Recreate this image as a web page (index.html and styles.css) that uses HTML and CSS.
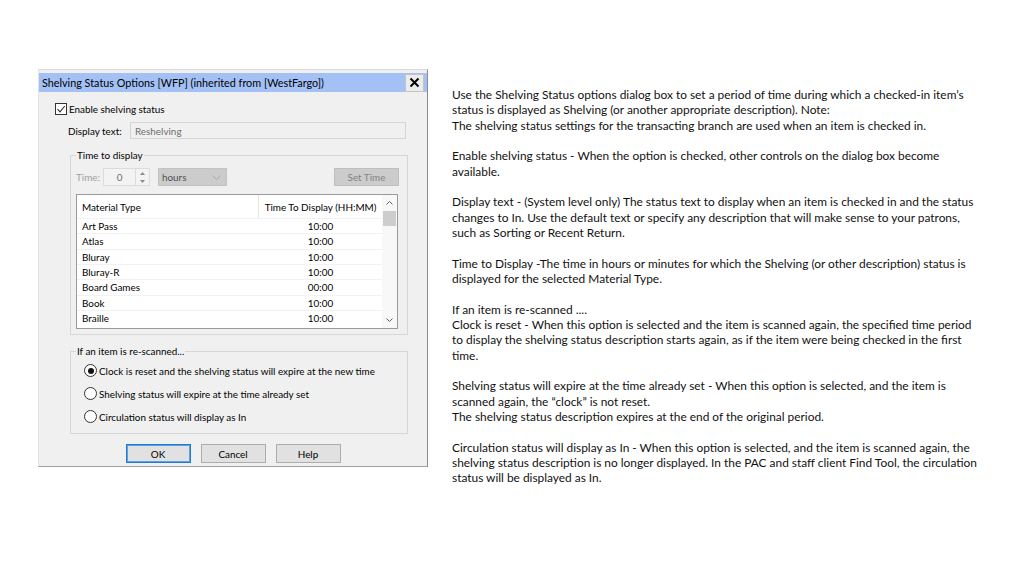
FILE: index.html
```html
<!DOCTYPE html>
<html lang="en">
<head>
<meta charset="utf-8">
<title>Shelving Status Options</title>
<link rel="stylesheet" href="styles.css">
</head>
<body>
<main class="slide">
  <section class="dialog">
    <div class="titlebar">
      <span class="title">Shelving Status Options [WFP] (inherited from [WestFargo])</span>
      <span class="close"><svg width="11" height="11" viewBox="0 0 11 11"><path d="M1.5 1.5 L9.5 9.5 M9.5 1.5 L1.5 9.5" stroke="#000" stroke-width="2" fill="none"/></svg></span>
    </div>
    <div class="dlg-body">
      <div class="check-row">
        <span class="checkbox"><svg width="10" height="10" viewBox="0 0 10 10"><path d="M1.5 5.2 L4 7.8 L8.8 2" stroke="#333" stroke-width="1.1" fill="none"/></svg></span>
        <span>Enable shelving status</span>
      </div>
      <div class="field-row">
        <span class="field-label">Display text:</span>
        <span class="textbox">Reshelving</span>
      </div>
      <fieldset class="group group-time">
        <legend>Time to display</legend>
        <div class="time-row">
          <span class="lbl-dim">Time:</span>
          <span class="numbox">0</span>
          <span class="spin">
            <span class="spin-half"><svg width="5" height="3" viewBox="0 0 5 3"><path d="M0 3 L2.5 0 L5 3 Z" fill="#8a8a8a"/></svg></span>
            <span class="spin-half"><svg width="5" height="3" viewBox="0 0 5 3"><path d="M0 0 L2.5 3 L5 0 Z" fill="#8a8a8a"/></svg></span>
          </span>
          <span class="combo"><span>hours</span><svg width="9" height="5" viewBox="0 0 9 5"><path d="M0.5 0.5 L4.5 4.5 L8.5 0.5" stroke="#a8a8a8" stroke-width="1" fill="none"/></svg></span>
          <span class="btn-dim">Set Time</span>
        </div>
        <div class="listview">
          <div class="lv-table">
            <div class="lv-head">
              <span class="c1">Material Type</span>
              <span class="c2">Time To Display (HH:MM)</span>
            </div>
            <div class="lv-row"><span class="c1">Art Pass</span><span class="c2">10:00</span></div>
            <div class="lv-row"><span class="c1">Atlas</span><span class="c2">10:00</span></div>
            <div class="lv-row"><span class="c1">Bluray</span><span class="c2">10:00</span></div>
            <div class="lv-row"><span class="c1">Bluray-R</span><span class="c2">10:00</span></div>
            <div class="lv-row"><span class="c1">Board Games</span><span class="c2">00:00</span></div>
            <div class="lv-row"><span class="c1">Book</span><span class="c2">10:00</span></div>
            <div class="lv-row"><span class="c1">Braille</span><span class="c2">10:00</span></div>
          </div>
          <div class="scrollbar">
            <span class="sb-arrow"><svg width="7" height="4" viewBox="0 0 7 4"><path d="M0.5 3.5 L3.5 0.5 L6.5 3.5" stroke="#606060" stroke-width="1" fill="none"/></svg></span>
            <span class="sb-thumb"></span>
            <span class="sb-track"></span>
            <span class="sb-arrow"><svg width="7" height="4" viewBox="0 0 7 4"><path d="M0.5 0.5 L3.5 3.5 L6.5 0.5" stroke="#606060" stroke-width="1" fill="none"/></svg></span>
          </div>
        </div>
      </fieldset>
      <fieldset class="group group-rescan">
        <legend>If an item is re-scanned...</legend>
        <div class="radio-row"><span class="radio radio-on"></span><span>Clock is reset and the shelving status will expire at the new time</span></div>
        <div class="radio-row"><span class="radio"></span><span>Shelving status will expire at the time already set</span></div>
        <div class="radio-row"><span class="radio"></span><span>Circulation status will display as In</span></div>
      </fieldset>
      <div class="buttons">
        <span class="btn btn-default">OK</span>
        <span class="btn">Cancel</span>
        <span class="btn">Help</span>
      </div>
    </div>
  </section>

  <section class="notes">
    <p>Use the Shelving Status options dialog box to set a period of time during which a checked-in item’s<br>status is displayed as Shelving (or another appropriate description). Note:<br>The shelving status settings for the transacting branch are used when an item is checked in.</p>
    <p>Enable shelving status - When the option is checked, other controls on the dialog box become<br>available.</p>
    <p>Display text - (System level only) The status text to display when an item is checked in and the status<br>changes to In. Use the default text or specify any description that will make sense to your patrons,<br>such as Sorting or Recent Return.</p>
    <p>Time to Display -The time in hours or minutes for which the Shelving (or other description) status is<br>displayed for the selected Material Type.</p>
    <p>If an item is re-scanned ....<br>Clock is reset - When this option is selected and the item is scanned again, the specified time period<br>to display the shelving status description starts again, as if the item were being checked in the first<br>time.</p>
    <p>Shelving status will expire at the time already set - When this option is selected, and the item is<br>scanned again, the “clock” is not reset.<br>The shelving status description expires at the end of the original period.</p>
    <p>Circulation status will display as In - When this option is selected, and the item is scanned again, the<br>shelving status description is no longer displayed. In the PAC and staff client Find Tool, the circulation<br>status will be displayed as In.</p>
  </section>
</main>
</body>
</html>
```

FILE: styles.css
```css
* { box-sizing: border-box; }

body {
  margin: 0;
  background: #ffffff;
}

.slide {
  width: 1024px;
  height: 576px;
  display: flex;
  align-items: flex-start;
  padding: 69px 0 0 38px;
  overflow: hidden;
}

/* ---------- dialog ---------- */
.dialog {
  width: 390px;
  background: #f0f0f0;
  border-top: 1px solid #dadada;
  border-left: 1px solid #e2e2e2;
  border-right: 1px solid #8c8c8c;
  border-bottom: 1px solid #a0a0a0;
  font-family: "Lato", "Liberation Sans", sans-serif;
  font-size: 9.9px;
  color: #000;
}

.titlebar {
  margin-top: 3px;
  height: 19px;
  background: #a3c1f5;
  display: flex;
  align-items: center;
  padding-left: 3px;
}

.title {
  flex: 1;
  font-size: 10.8px;
  color: #000;
  white-space: nowrap;
}

.close {
  width: 19px;
  height: 18px;
  margin-right: 3px;
  background: #ececec;
  border: 1px solid #c4c4c4;
  display: flex;
  align-items: center;
  justify-content: center;
}

.dlg-body {
  display: flex;
  flex-direction: column;
  align-items: flex-start;
  padding: 11px 0 3px 0;
}

.check-row {
  margin-left: 16px;
  height: 12px;
  display: flex;
  align-items: center;
  gap: 2px;
  white-space: nowrap;
}

.checkbox {
  width: 12px;
  height: 12px;
  border: 1px solid #333;
  background: #fff;
  display: flex;
  align-items: center;
  justify-content: center;
}

.field-row {
  margin: 7px 0 0 29px;
  display: flex;
  align-items: center;
  gap: 6px;
}

.field-label {
  width: 56px;
  white-space: nowrap;
}

.textbox {
  width: 276px;
  height: 17px;
  background: #f0f0f0;
  border: 1px solid #d5d5d5;
  color: #6e6e6e;
  padding-left: 4px;
  display: flex;
  align-items: center;
}

/* ---------- group boxes ---------- */
.group {
  margin: 10px 0 0 31px;
  width: 338px;
  border: 1px solid #d6d6d6;
  padding: 7px 8px 5px 5px;
  min-width: 0;
}

.group legend {
  padding: 0 1px;
  line-height: 12px;
  white-space: nowrap;
}

.time-row {
  height: 18px;
  display: flex;
  align-items: center;
}

.lbl-dim {
  width: 27px;
  color: #a0a0a0;
}

.numbox {
  width: 33px;
  height: 18px;
  background: #f3f3f3;
  border: 1px solid #dcdcdc;
  color: #6e6e6e;
  display: flex;
  align-items: center;
  justify-content: center;
}

.spin {
  width: 14px;
  height: 18px;
  display: flex;
  flex-direction: column;
  border: 1px solid #dcdcdc;
  border-left: none;
  background: #f3f3f3;
}

.spin-half {
  flex: 1;
  display: flex;
  align-items: center;
  justify-content: center;
}

.combo {
  margin-left: 8px;
  width: 69px;
  height: 18px;
  background: #cccccc;
  border: 1px solid #c3c3c3;
  color: #4f4f4f;
  padding: 0 5px 0 3px;
  display: flex;
  align-items: center;
  justify-content: space-between;
}

.btn-dim {
  margin-left: auto;
  width: 65px;
  height: 18px;
  background: #cccccc;
  border: 1px solid #bfbfbf;
  color: #838383;
  display: flex;
  align-items: center;
  justify-content: center;
}

/* ---------- list view ---------- */
.listview {
  margin-top: 8px;
  width: 322px;
  height: 135px;
  border: 1px solid #9a9a9a;
  background: #fff;
  display: flex;
  overflow: hidden;
}

.lv-table {
  flex: 1;
  overflow: hidden;
}

.lv-head,
.lv-row {
  display: flex;
  align-items: center;
  white-space: nowrap;
}

.lv-head {
  height: 23px;
}

.lv-row {
  height: 15.33px;
  border-top: 1px solid #f2f2f2;
}

.c1 {
  width: 182px;
  padding-left: 5px;
}

.c2 {
  flex: 1;
  text-align: center;
}

.lv-head .c1 {
  height: 100%;
  display: flex;
  align-items: center;
  border-right: 1px solid #e5e5e5;
}

.scrollbar {
  width: 15px;
  background: #f8f8f8;
  display: flex;
  flex-direction: column;
  align-items: center;
}

.sb-arrow {
  height: 16px;
  width: 100%;
  display: flex;
  align-items: center;
  justify-content: center;
}

.sb-thumb {
  width: 13px;
  height: 15px;
  background: #cdcdcd;
}

.sb-track {
  flex: 1;
}

/* ---------- radios ---------- */
.group-rescan {
  padding-top: 2px;
  padding-bottom: 5px;
}

.radio-row {
  height: 23px;
  margin-left: 8px;
  display: flex;
  align-items: center;
  gap: 2px;
  white-space: nowrap;
}

.radio {
  width: 13px;
  height: 13px;
  border: 1px solid #333;
  border-radius: 50%;
  background: #fff;
  display: flex;
  align-items: center;
  justify-content: center;
}

.radio-on::after {
  content: "";
  width: 6px;
  height: 6px;
  border-radius: 50%;
  background: #111;
}

/* ---------- buttons ---------- */
.buttons {
  align-self: stretch;
  margin-top: 10px;
  display: flex;
  justify-content: center;
  gap: 10px;
}

.btn {
  width: 65px;
  height: 19px;
  background: #e1e1e1;
  border: 1px solid #adadad;
  display: flex;
  align-items: center;
  justify-content: center;
}

.btn-default {
  border: 1px solid #1f7bd4;
  box-shadow: inset 0 0 0 1px #5fa0e0;
}

/* ---------- notes ---------- */
.notes {
  margin: 18px 0 0 24px;
  font-family: "Lato", "Liberation Sans", sans-serif;
  font-size: 11.9px;
  line-height: 15.33px;
  color: #111;
  white-space: nowrap;
}

.notes p {
  margin: 0 0 15.33px;
}
```
